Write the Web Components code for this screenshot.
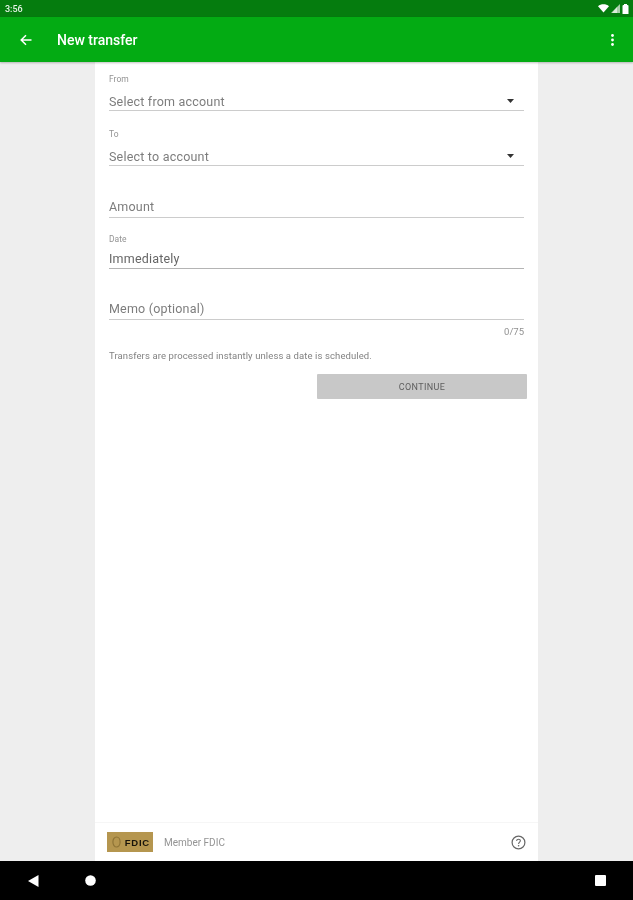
<!DOCTYPE html>
<html>
<head>
<meta charset="utf-8">
<title>New transfer</title>
<style>
  html, body { margin: 0; height: 100%; }
  body { font-family: Roboto, "Liberation Sans", sans-serif; background: #eeeeee; }
  bank-app { height: 900px; }
</style>
</head>
<body>
<bank-app></bank-app>
<script>
class StatusBar extends HTMLElement {
  constructor() {
    super();
    this.attachShadow({ mode: "open" }).innerHTML = `
<style>
  :host { display: flex; align-items: center; justify-content: space-between; height: 17px; padding: 0 4px 0 5px; background: #057c0e; color: #e6f2e6; font-size: 9px; font-weight: 500; }
  #icons { display: flex; align-items: center; gap: 2px; }
  svg { display: block; }
</style>
<span>3:56</span>
<div id="icons">
  <svg width="11" height="9" viewBox="0 0 11 9"><path d="M0 2.2C3 -.4 8 -.4 11 2.2L5.5 8.6Z" fill="#fff"/></svg>
  <svg width="9" height="9" viewBox="0 0 9 9"><path d="M9 0V9H0Z" fill="#a9cfa9"/><path d="M6 3V9H1Z" fill="#fff" opacity=".6"/></svg>
  <svg width="7" height="10" viewBox="0 0 7 10"><path d="M.5 2Q.5 1 1.5 1H2V0H5V1H5.5Q6.5 1 6.5 2V10H.5Z" fill="#fff"/></svg>
</div>`;
  }
}

class AppBar extends HTMLElement {
  constructor() {
    super();
    this.attachShadow({ mode: "open" }).innerHTML = `
<style>
  :host { display: flex; align-items: center; height: 45px; background: #03ab13; color: #fff; box-shadow: 0 1px 2px rgba(0,0,0,.25); position: relative; }
  #back { width: 14px; height: 14px; margin-left: 19px; }
  #title { margin-left: 24px; font-size: 14px; font-weight: 500; flex: 1; }
  #more { margin-right: 19px; }
  svg { display: block; }
</style>
<svg id="back" viewBox="0 0 14 14"><path d="M12.5 7H2.5M7 2.2L2.2 7L7 11.8" fill="none" stroke="#fff" stroke-width="1.5"/></svg>
<span id="title"><slot></slot></span>
<svg id="more" width="3" height="12" viewBox="0 0 3 12"><circle cx="1.5" cy="1.5" r="1.4" fill="#fff"/><circle cx="1.5" cy="6" r="1.4" fill="#fff"/><circle cx="1.5" cy="10.5" r="1.4" fill="#fff"/></svg>`;
  }
}

class FormField extends HTMLElement {
  constructor() {
    super();
    this.attachShadow({ mode: "open" }).innerHTML = `
<style>
  :host { display: block; }
  #label { height: 11px; line-height: 11px; font-size: 8.5px; color: #939393; }
  #row { box-sizing: border-box; display: flex; align-items: center; justify-content: space-between; height: 26px; padding-top: 7px; border-bottom: 1.5px solid #cccccc; font-size: 12.5px; letter-spacing: .2px; color: #7d7d7d; }
  :host([hint]) #row { padding-top: 4px; padding-bottom: 1px; }
  :host([filled]) #row { height: 24px; padding-top: 4px; color: #666; border-bottom-color: #b4b4b4; }
  svg { display: none; margin-right: 10px; }
  :host([select]) svg { display: block; }
</style>
<div id="label"></div>
<div id="row"><span id="value"></span><svg width="7" height="4" viewBox="0 0 7 4"><path d="M0 0H7L3.5 4Z" fill="#333"/></svg></div>`;
  }

  connectedCallback() {
    this.shadowRoot.querySelector("#label").textContent = this.getAttribute("label") || "";
    this.shadowRoot.querySelector("#value").textContent = this.getAttribute("value") || "";
  }
}

class FdicFooter extends HTMLElement {
  constructor() {
    super();
    this.attachShadow({ mode: "open" }).innerHTML = `
<style>
  :host { display: flex; align-items: center; height: 38px; padding: 0 12px; border-top: 1px solid #f6f6f6; font-size: 10px; color: #949494; }
  #logo { display: flex; align-items: center; justify-content: space-between; box-sizing: border-box; width: 46px; height: 20px; padding: 0 3px 0 5px; background: #b5964f; color: #17130a; font: 700 9.5px "Liberation Sans", sans-serif; letter-spacing: .8px; }
  #text { margin-left: 11px; flex: 1; }
  svg { display: block; }
</style>
<div id="logo">
  <svg width="9" height="12" viewBox="0 0 9 12"><ellipse cx="4.5" cy="6" rx="3.6" ry="5" fill="none" stroke="#8f7436" stroke-width="1.2"/></svg>
  <span>FDIC</span>
</div>
<span id="text">Member FDIC</span>
<svg width="15" height="15" viewBox="0 0 15 15"><circle cx="7.5" cy="7.5" r="6.4" fill="none" stroke="#666" stroke-width="1.2"/><path d="M5.6 6Q5.7 4.2 7.5 4.2Q9.4 4.2 9.4 5.8C9.4 7 7.6 7.2 7.6 8.9" fill="none" stroke="#666" stroke-width="1.1"/><circle cx="7.6" cy="10.7" r=".8" fill="#666"/></svg>`;
  }
}

class NavBar extends HTMLElement {
  constructor() {
    super();
    this.attachShadow({ mode: "open" }).innerHTML = `
<style>
  :host { display: flex; align-items: center; height: 39px; padding: 0 27px 0 28px; background: #000; }
  svg { display: block; }
  #home { margin-left: 46px; flex: 1; }
</style>
<svg width="11" height="12" viewBox="0 0 11 12"><path d="M10.5 0V12L0 6Z" fill="#fff"/></svg>
<div id="home"><svg width="11" height="11" viewBox="0 0 11 11"><circle cx="5.5" cy="5.5" r="5.3" fill="#fff"/></svg></div>
<svg width="11" height="11" viewBox="0 0 11 11"><rect width="11" height="11" rx="1" fill="#fff"/></svg>`;
  }
}

class TransferForm extends HTMLElement {
  constructor() {
    super();
    this.attachShadow({ mode: "open" }).innerHTML = `
<style>
  :host { display: flex; flex-direction: column; flex: none; width: 443px; background: #fff; }
  #form { flex: 1; padding: 12px 14px 0 14px; }
  #to { margin-top: 18px; }
  #amount { margin-top: 15px; }
  #date { margin-top: 16px; }
  #memo { margin-top: 14px; }
  #counter { margin-top: 6px; text-align: right; font-size: 9.5px; line-height: 11px; color: #919191; }
  #hint { margin-top: 13px; font-size: 9.5px; line-height: 11px; color: #828282; letter-spacing: .1px; }
  #actions { display: flex; justify-content: flex-end; margin: 13px -3px 0 0; }
  #continue { display: flex; align-items: center; justify-content: center; width: 210px; height: 25px; border-radius: 1px; background: #c8c8c8; color: #5e5e5e; font-size: 9px; letter-spacing: .35px; }
</style>
<div id="form">
  <form-field label="From" value="Select from account" select></form-field>
  <form-field id="to" label="To" value="Select to account" select></form-field>
  <form-field id="amount" value="Amount" hint></form-field>
  <form-field id="date" label="Date" value="Immediately" filled></form-field>
  <form-field id="memo" value="Memo (optional)" hint></form-field>
  <div id="counter">0/75</div>
  <div id="hint">Transfers are processed instantly unless a date is scheduled.</div>
  <div id="actions"><div id="continue">CONTINUE</div></div>
</div>
<fdic-footer></fdic-footer>`;
  }
}

class BankApp extends HTMLElement {
  constructor() {
    super();
    this.attachShadow({ mode: "open" }).innerHTML = `
<style>
  :host { display: flex; flex-direction: column; background: #eeeeee; filter: blur(.4px); }
  #main { display: flex; justify-content: center; flex: 1; min-height: 0; }
</style>
<status-bar></status-bar>
<app-bar>New transfer</app-bar>
<div id="main"><transfer-form></transfer-form></div>
<nav-bar></nav-bar>`;
  }
}

customElements.define("status-bar", StatusBar);
customElements.define("app-bar", AppBar);
customElements.define("form-field", FormField);
customElements.define("fdic-footer", FdicFooter);
customElements.define("nav-bar", NavBar);
customElements.define("transfer-form", TransferForm);
customElements.define("bank-app", BankApp);
</script>
</body>
</html>
